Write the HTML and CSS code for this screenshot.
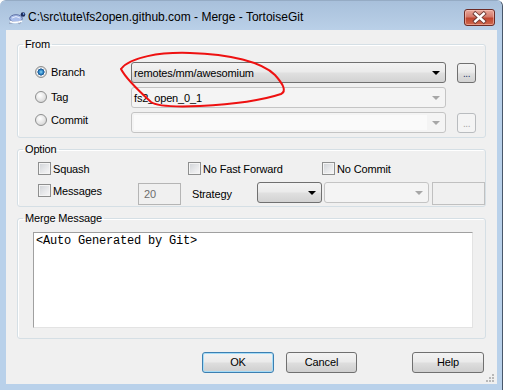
FILE: index.html
```
<!DOCTYPE html>
<html lang="en">
  <head>
    <meta charset="UTF-8" />
    <title>Merge - TortoiseGit</title>
    <link rel="stylesheet" href="styles.css">
  </head>
  <body>
    <div class="window">
      <div class="titlebar">
        <svg class="app-icon" width="18" height="15" viewBox="0 0 18 15">
          <path d="M3 11 L1.5 13.5 L4.5 13 Z M10 11.5 L11 14 L13 12.5 Z" fill="#f4f6fb" stroke="#7d8aa6" stroke-width="0.7" />
          <ellipse cx="8" cy="8.5" rx="6.3" ry="3.8" fill="#a9bdea" stroke="#5d6fa3" stroke-width="1" />
          <path d="M4 8 Q8 5 12 8" fill="none" stroke="#e6ecfb" stroke-width="1" />
          <path d="M2 11.5 Q8 13.5 14 11" fill="none" stroke="#ffffff" stroke-width="1.6" />
          <circle cx="15" cy="4.5" r="2.3" fill="#1c2c5c" />
          <circle cx="15.6" cy="3.9" r="0.8" fill="#7fb2ff" />
        </svg>
        <span class="title">C:\src\tute\fs2open.github.com - Merge - TortoiseGit</span>
        <div class="close">
          <svg width="31" height="17" viewBox="0 0 31 17">
            <path d="M11 4.5 L20 12.5 M20 4.5 L11 12.5" stroke="#6e3a34" stroke-width="4.6" stroke-linecap="square" />
            <path d="M11 4.5 L20 12.5 M20 4.5 L11 12.5" stroke="#ffffff" stroke-width="2.6" stroke-linecap="square" />
          </svg>
        </div>
      </div>

      <div class="client">
        <fieldset class="group group-from">
          <legend>From</legend>
          <div class="ref-row">
            <div class="opt"><span class="radio on"></span>Branch</div>
            <div class="combo">remotes/mm/awesomium<span class="arrow"></span></div>
            <div class="browse">...</div>
          </div>
          <div class="ref-row">
            <div class="opt"><span class="radio"></span>Tag</div>
            <div class="combo off">fs2_open_0_1<span class="arrow"></span></div>
          </div>
          <div class="ref-row">
            <div class="opt opt-low"><span class="radio"></span>Commit</div>
            <div class="combo off"><span class="edit"></span><span class="arrow"></span></div>
            <div class="browse off">...</div>
          </div>
        </fieldset>

        <fieldset class="group group-option">
          <legend>Option</legend>
          <div class="opt-row">
            <div class="check-cell cell-squash"><span class="check"></span>Squash</div>
            <div class="check-cell cell-noff"><span class="check"></span>No Fast Forward</div>
            <div class="check-cell"><span class="check"></span>No Commit</div>
          </div>
          <div class="opt-row opt-row-2">
            <div class="check-cell cell-messages"><span class="check"></span>Messages</div>
            <div class="num-box">20</div>
            <div class="strategy-label">Strategy</div>
            <div class="combo small-combo"><span class="arrow"></span></div>
            <div class="combo off wide-combo"><span class="arrow"></span></div>
            <div class="blank-box"></div>
          </div>
        </fieldset>

        <fieldset class="group group-message">
          <legend>Merge Message</legend>
          <div class="message-box">&lt;Auto Generated by Git&gt;</div>
        </fieldset>

        <div class="buttons">
          <div class="btn default">OK</div>
          <div class="btn cancel">Cancel</div>
          <div class="btn help">Help</div>
        </div>

        <svg class="grip" width="10" height="10" viewBox="0 0 10 10">
          <g fill="#b8b8b8">
            <rect x="7" y="1" width="2" height="2" />
            <rect x="4" y="4" width="2" height="2" />
            <rect x="7" y="4" width="2" height="2" />
            <rect x="1" y="7" width="2" height="2" />
            <rect x="4" y="7" width="2" height="2" />
            <rect x="7" y="7" width="2" height="2" />
          </g>
        </svg>
      </div>

      <!-- red marker someone drew over the screenshot -->
      <svg class="annotation" width="505" height="390" viewBox="0 0 505 390">
        <path d="M121 69 C130 57, 160 52, 190 53 C230 54, 262 62, 275 75 C283 84, 287 91, 281 94 C266 99, 240 104, 200 106 C176 107, 156 106, 151 102 C140 92, 126 79, 121 69"
              fill="none" stroke="#ee1111" stroke-width="2" stroke-linecap="round" />
      </svg>
    </div>
  </body>
</html>
```

FILE: styles.css
```
* {
  margin: 0;
  padding: 0;
  box-sizing: border-box;
}

body {
  width: 505px;
  height: 390px;
  background-color: #ffffff;
  font-family: "Liberation Sans", Arial, sans-serif;
  font-size: 11px;
  letter-spacing: -0.15px;
  color: #000000;
  overflow: hidden;
}

.window {
  position: relative;
  width: 503px;
  height: 390px;
  background-color: #b9d1ea;
  border-right: 1px solid #48576a;
  border-top: 1px solid #95abc4;
  border-radius: 6px 6px 0 0;
}

.titlebar {
  height: 29px;
  padding-top: 3px;
  padding-left: 8px;
  display: flex;
  align-items: center;
  background: linear-gradient(180deg, #a8c0db 0%, #b2c9e2 55%, #bad0e8 100%);
  border-radius: 6px 6px 0 0;
}

.app-icon {
  flex: none;
  margin-right: 2px;
}

.title {
  font-size: 12px;
  letter-spacing: 0;
  color: #000000;
  white-space: nowrap;
}

.close {
  margin-left: auto;
  margin-right: 7px;
  width: 31px;
  height: 17px;
  border: 1px solid #6d2b25;
  border-radius: 3px;
  background: linear-gradient(180deg, #e9a99c 0%, #d47a6b 45%, #c0452f 55%, #cf6a4f 100%);
  box-shadow: inset 0 0 0 1px rgba(255, 210, 200, 0.5);
  display: flex;
  align-items: center;
  justify-content: center;
}

.close svg {
  display: block;
}

.client {
  position: relative;
  margin-left: 6px;
  width: 491px;
  height: 354px;
  padding: 7px 11px 0 11px;
  background-color: #f0f0f0;
}

.group {
  border: 1px solid #d5dfe5;
  border-radius: 3px;
  box-shadow: inset 1px 1px 0 #ffffff;
  min-inline-size: 0;
}

.group legend {
  margin-left: 5px;
  padding: 0 2px;
  line-height: 14px;
  height: 14px;
}

/* From */

.group-from {
  padding: 11px 0 4px 0;
  display: flex;
  flex-direction: column;
  gap: 4px;
}

.ref-row {
  height: 21px;
  padding-left: 17px;
  display: flex;
  align-items: center;
}

.opt {
  width: 96px;
  display: flex;
  align-items: center;
  margin-top: -1px;
}

.opt-low {
  margin-top: -5px;
}

.radio {
  width: 12px;
  height: 12px;
  margin-right: 4px;
  border-radius: 50%;
  border: 1px solid #8e8f8f;
  background: radial-gradient(circle at 40% 35%, #ffffff 0%, #e4e4e4 55%, #c7c7c7 100%);
}

.radio.on {
  background: radial-gradient(circle at 50% 50%, #8fd6f6 0px, #2d86c6 2px, #17508c 3.3px, #ffffff 3.8px, #e4e4e4 55%, #c7c7c7 100%);
}

.combo {
  width: 315px;
  height: 21px;
  padding: 0 5px 0 2px;
  display: flex;
  align-items: center;
  justify-content: space-between;
  border: 1px solid #707070;
  border-radius: 3px;
  background: linear-gradient(180deg, #f3f3f3 0%, #ebebeb 45%, #dfdfdf 55%, #d2d2d2 100%);
  white-space: nowrap;
}

.combo.off {
  border-color: #c4c4c4;
  background: #f4f4f4;
}

.arrow {
  flex: none;
  margin-left: auto;
  width: 0;
  height: 0;
  border-left: 4px solid transparent;
  border-right: 4px solid transparent;
  border-top: 4px solid #000000;
}

.combo.off .arrow {
  border-top-color: #a6a6a6;
}

.edit {
  width: 293px;
  height: 15px;
  background-color: #fafafa;
}

.browse {
  margin-left: 11px;
  width: 19px;
  height: 20px;
  border: 1px solid #707070;
  border-radius: 3px;
  background: linear-gradient(180deg, #f3f3f3 0%, #ebebeb 45%, #dfdfdf 55%, #d2d2d2 100%);
  color: #1d3565;
  text-align: center;
  line-height: 20px;
  font-size: 10px;
  letter-spacing: -0.5px;
}

.browse.off {
  border-color: #b9bcbf;
  background: #f4f4f4;
  color: #a6a6a6;
}

/* Option */

.group-option {
  margin-top: 4px;
  padding: 6px 0 1px 0;
}

.opt-row {
  height: 13px;
  padding-left: 20px;
  display: flex;
  align-items: center;
}

.opt-row-2 {
  margin-top: 7px;
  height: 23px;
  align-items: flex-start;
}

.check-cell {
  display: flex;
  align-items: center;
  height: 13px;
}

.cell-squash {
  width: 150px;
}

.cell-noff {
  width: 134px;
}

.cell-messages {
  width: 100px;
  margin-top: 2px;
}

.check {
  width: 13px;
  height: 13px;
  margin-right: 2px;
  border: 1px solid #8e8f8f;
  background: linear-gradient(135deg, #cfd2d6 0%, #e9eaec 60%, #f7f7f7 100%);
  box-shadow: inset 0 0 0 1px #f4f4f4;
}

.num-box {
  margin-top: 1px;
  width: 43px;
  height: 22px;
  padding-left: 5px;
  line-height: 20px;
  border: 1px solid #b5b5b5;
  background-color: #f0f0f0;
  color: #6d6d6d;
}

.strategy-label {
  margin-left: 11px;
  width: 65px;
  line-height: 24px;
}

.small-combo {
  width: 65px;
}

.wide-combo {
  margin-left: 2px;
  width: 105px;
}

.blank-box {
  margin-left: 3px;
  width: 53px;
  height: 23px;
  border: 1px solid #c0c0c0;
  background-color: #f0f0f0;
}

/* Merge Message */

.group-message {
  margin-top: 4px;
  padding: 7px 0 10px 0;
}

.message-box {
  margin-left: 15px;
  width: 440px;
  height: 96px;
  padding: 1px 2px;
  background-color: #ffffff;
  border: 1px solid;
  border-color: #a0a0a0 #e3e3e3 #e3e3e3 #a0a0a0;
  font-family: "Liberation Mono", "Courier New", monospace;
  font-size: 12px;
  line-height: 14px;
  letter-spacing: -0.2px;
}

/* buttons */

.buttons {
  margin-top: 13px;
  padding-left: 185px;
  display: flex;
}

.btn {
  width: 72px;
  height: 21px;
  border: 1px solid #707070;
  border-radius: 3px;
  background: linear-gradient(180deg, #f3f3f3 0%, #ebebeb 45%, #dddddd 55%, #cfcfcf 100%);
  text-align: center;
  line-height: 19px;
}

.btn.default {
  border-color: #3c7fb1;
  box-shadow: inset 0 0 0 1px #a6dcf7;
}

.btn.cancel {
  margin-left: 12px;
  width: 71px;
}

.btn.help {
  margin-left: 55px;
}

.grip {
  position: absolute;
  right: 2px;
  bottom: 1px;
}

.annotation {
  position: absolute;
  top: -1px;
  left: 0;
  pointer-events: none;
}
```
